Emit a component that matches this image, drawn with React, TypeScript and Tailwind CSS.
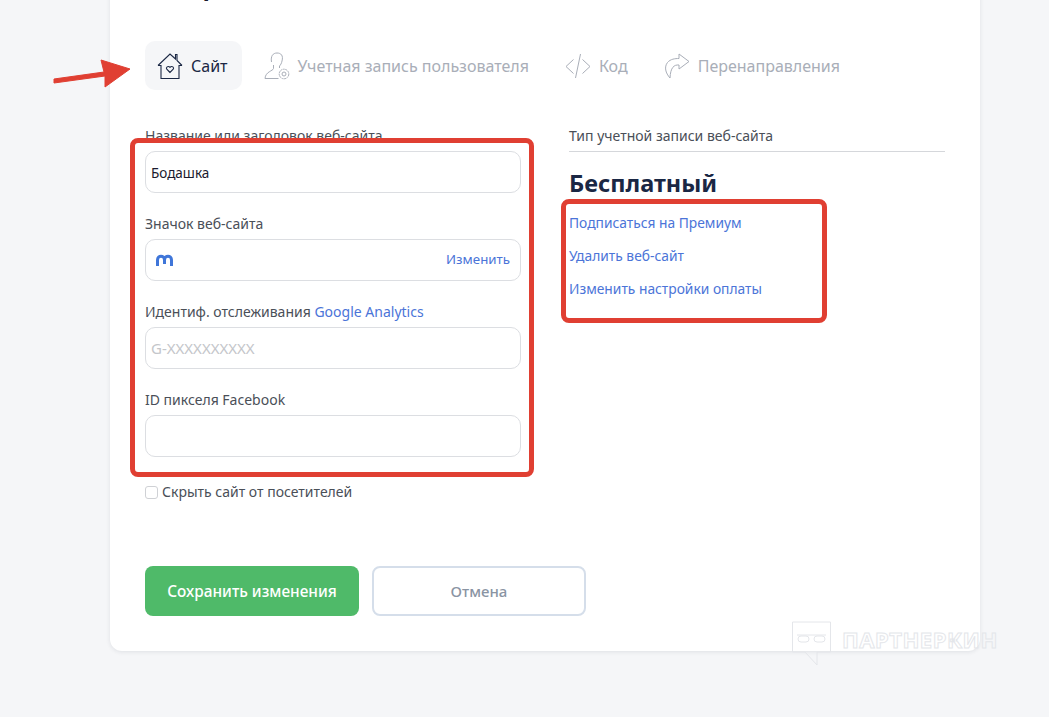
const font = { fontFamily: '"Noto Sans", sans-serif' };

function HouseIcon() {
  return (
    <svg width="26" height="28" viewBox="0 0 26 28" fill="none" stroke="#1a2744" strokeWidth="1.1" className="shrink-0">
      <path d="M1 13.5 L13 2 L18.5 7 V2.5 H20 V8.5 L25 13.5" />
      <path d="M1 13.5 H4 V26.5 H22 V13.5 H25" />
      <path d="M13 20.5 L9.8 17.2 C8.6 15.6 10.8 13.4 13 15.2 C15.2 13.4 17.4 15.6 16.2 17.2 Z" />
    </svg>
  );
}

function UserGearIcon() {
  return (
    <svg width="26" height="28" viewBox="0 0 26 28" fill="none" stroke="#a9aeb8" strokeWidth="1" className="shrink-0">
      <path d="M7.5 10 C6.5 4 9 1 13 1 C17 1 19.5 3.5 18 9 C17.5 11.5 16.5 13 15.5 14 V16 M9.5 13 V16.5 C9 19 1.5 19.5 1 26.5 H14.5" />
      <circle cx="20" cy="22" r="4.8" strokeDasharray="2 0.6" />
      <circle cx="20" cy="22" r="2" />
    </svg>
  );
}

function CodeIcon() {
  return (
    <svg width="26" height="26" viewBox="0 0 26 26" fill="none" stroke="#a9aeb8" strokeWidth="1" className="shrink-0">
      <path d="M8.5 6.5 L1 13.5 L8.5 20.5" />
      <path d="M17.5 6.5 L25 13.5 L17.5 20.5" />
      <path d="M15.5 1 L10.5 25" />
    </svg>
  );
}

function RedirectIcon() {
  return (
    <svg width="26" height="26" viewBox="0 0 26 26" fill="none" stroke="#a9aeb8" strokeWidth="1" className="shrink-0">
      <path d="M15 1 L25 8.5 L15 16 V12 C10 11.5 6.5 14.5 6 25 C1.5 20 0 14 3.5 9.5 C6.5 6 11 5.5 15 5.5 Z" />
    </svg>
  );
}

function Tab({ icon, label, active }: { icon: React.ReactNode; label: string; active?: boolean }) {
  return (
    <div className={`flex items-center gap-2 h-[49px] rounded-[10px] ${active ? 'bg-[#f5f6f8] text-[#1a2744] pl-3 pr-[14px]' : 'text-[#a9aeb8]'}`}>
      {icon}
      <span className="pt-px text-base whitespace-nowrap">{label}</span>
    </div>
  );
}

function Field({ label, children }: { label: React.ReactNode; children: React.ReactNode }) {
  return (
    <div className="flex flex-col">
      <div className="h-4 mb-[7px] text-sm leading-4 text-[#4a4f58] whitespace-nowrap">{label}</div>
      {children}
    </div>
  );
}

const inputCls =
  'w-full h-[42px] px-[5px] rounded-[10px] border border-[#dcdee2] bg-white text-[13.5px] text-[#1a1a2e] outline-none placeholder:text-[#c4c6ca]';

export default function App() {
  return (
    <div className="relative h-[717px] w-[1049px] overflow-hidden bg-[#f5f6f8]" style={font}>
      <div className="ml-[110px] -mt-10 w-[870px] rounded-xl bg-white px-[35px] pt-[10px] pb-[35px] shadow-[0_1px_4px_rgba(30,40,60,0.1)]">
        <h1 className="h-8 mb-[39px] text-2xl leading-8 font-bold text-[#1a1a2e]">Настройки</h1>

        <div className="flex items-center">
          <Tab active icon={<HouseIcon />} label="Сайт" />
          <div className="w-[22px]" />
          <Tab icon={<UserGearIcon />} label="Учетная запись пользователя" />
          <div className="w-[36px]" />
          <Tab icon={<CodeIcon />} label="Код" />
          <div className="w-[36px]" />
          <Tab icon={<RedirectIcon />} label="Перенаправления" />
        </div>

        <div className="mt-[38px] grid grid-cols-[376px_376px] gap-x-12">
          <div className="flex flex-col gap-[23px]">
            <Field label="Название или заголовок веб-сайта">
              <input className={`${inputCls} pt-[2px]`} defaultValue="Бодашка" />
            </Field>
            <Field label="Значок веб-сайта">
              <div className="flex items-center justify-between h-[42px] pl-[10px] pr-[10px] rounded-[10px] border border-[#dcdee2]">
                <svg width="17" height="12" viewBox="0 0 17 12" fill="none" stroke="#3f76d9" strokeWidth="3">
                  <path d="M1.5 12 V6 C1.5 1 8.5 1 8.5 6 V10 M8.5 6 C8.5 1 15.5 1 15.5 6 V12" />
                </svg>
                <span className="text-[13.3px] text-[#4b74d8]">Изменить</span>
              </div>
            </Field>
            <Field
              label={
                <>
                  Идентиф. отслеживания <span className="text-[#4b74d8]">Google Analytics</span>
                </>
              }
            >
              <input className={`${inputCls} text-[15px]`} placeholder="G-XXXXXXXXXX" />
            </Field>
            <Field label="ID пикселя Facebook">
              <input className={inputCls} />
            </Field>
            <label className="mt-[2px] flex items-center gap-1 h-5 text-sm text-[#4a4f58]">
              <span className="h-[13px] w-[13px] rounded-[3px] border border-[#cfd1d5] bg-white" />
              Скрыть сайт от посетителей
            </label>
          </div>

          <div>
            <div className="h-4 mb-[7px] text-sm leading-4 text-[#4a4f58]">Тип учетной записи веб-сайта</div>
            <div className="border-t border-[#d5d7db]" />
            <div className="mt-[17px] text-[23.5px] leading-7 font-bold text-[#1a2744]">Бесплатный</div>
            <div className="mt-[16px] flex flex-col gap-[13px] text-[13.8px] leading-5 text-[#4b74d8]">
              <a>Подписаться на Премиум</a>
              <a>Удалить веб-сайт</a>
              <a>Изменить настройки оплаты</a>
            </div>
          </div>
        </div>

        <div className="mt-[64px] flex gap-[13px]">
          <button className="h-[50px] w-[214px] rounded-lg bg-[#4fba69] pt-[2px] text-[15.4px] font-medium text-white">
            Сохранить изменения
          </button>
          <button className="h-[50px] w-[214px] rounded-lg border-2 border-[#d5deea] bg-white text-[15px] font-medium text-[#8a94a3]">
            Отмена
          </button>
        </div>
      </div>

      {/* пометки поверх скриншота */}
      <div className="absolute left-[130px] top-[138px] h-[339px] w-[404px] rounded-lg border-[5px] border-[#e03f32]" />
      <div className="absolute left-[561px] top-[199px] h-[124px] w-[266px] rounded-lg border-[5px] border-[#e03f32]" />
      <svg className="absolute left-[50px] top-[58px]" width="84" height="32" viewBox="0 0 84 32">
        <path d="M4 21 L54 14 L51 2 L80 11 L55 29 L55 18 L4 25 Z" fill="#e03f32" stroke="#e03f32" strokeLinejoin="round" />
      </svg>

      {/* водяной знак */}
      <div className="absolute left-[791px] top-[621px] flex items-center gap-[10px]">
        <svg width="41" height="45" viewBox="0 0 41 45" fill="none" stroke="#e4e6ea" strokeWidth="1">
          <path d="M1.5 1 H39.5 V31 H26 V44 L14 31 H1.5 Z" />
          <path d="M6 14 H35" />
          <rect x="7" y="15" width="11" height="6" rx="3" />
          <rect x="23" y="15" width="11" height="6" rx="3" />
        </svg>
        <span className="-mt-[9px] text-[22px] font-bold tracking-[0.5px] text-transparent [-webkit-text-stroke:1px_#e4e6ea]">
          ПАРТНЕРКИН
        </span>
      </div>
    </div>
  );
}
